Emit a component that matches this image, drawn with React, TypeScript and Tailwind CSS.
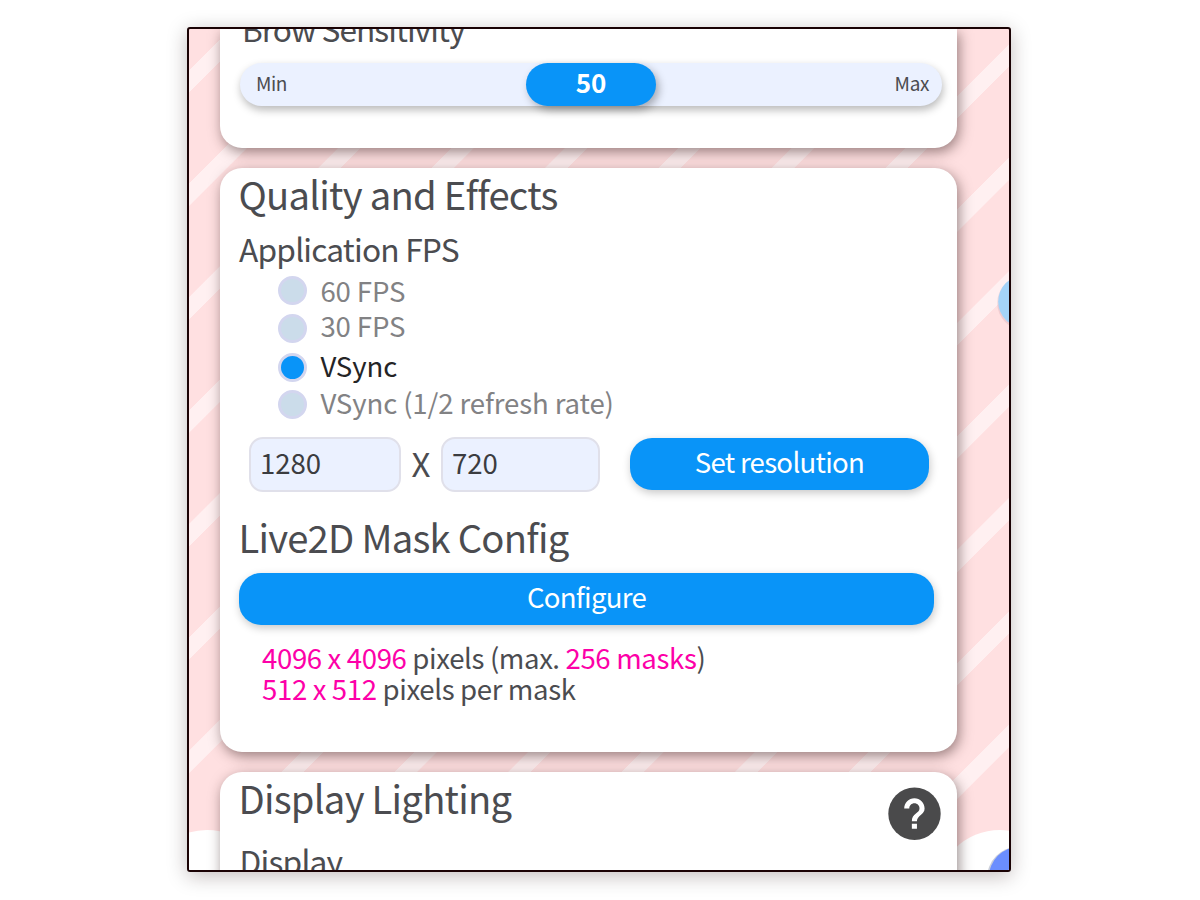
import React from "react";

const stripes =
  "bg-[repeating-linear-gradient(135deg,#ffe0e1_0px,#ffe0e1_29px,#fff0f1_29.4px,#fff0f1_44.8px,#ffe0e1_45.2px,#ffe0e1_80.2px)]";

const cardShadow = "shadow-[2px_4px_13px_rgba(50,25,25,0.5)]";

const titleStyle = "text-[38.2px] leading-[48px] tracking-[-0.74px] -ml-[0.6px]";

const buttonStyle =
  "rounded-[22px] bg-[#0994f8] text-[27.6px] leading-[44px] tracking-[-0.72px] text-white shadow-[1px_3px_8px_rgba(0,0,0,0.22)]";

const inputStyle =
  "flex h-[55px] items-center rounded-[14px] border-2 border-[#e0e0ea] bg-[#ebf1ff] pb-[6px] pl-[9px] text-[27.6px] leading-[40px] tracking-[-0.1px] text-[#3b3c40]";

function Radio({ label, checked, gap, lift }: { label: string; checked?: boolean; gap: string; lift: string }) {
  return (
    <label className={`flex h-[29px] items-center ${gap}`}>
      <span
        className={`h-[28.5px] w-[28.5px] shrink-0 rounded-full border-[3px] border-[#d3d6ef] ${checked ? "bg-[#0994f8]" : "bg-[#cbdcea]"}`}
      />
      <span
        className={`ml-[13.5px] text-[27.6px] leading-[28px] tracking-[-0.12px] whitespace-nowrap ${lift} ${checked ? "text-[#242426]" : "text-[#828284]"}`}
      >
        {label}
      </span>
    </label>
  );
}

export default function App() {
  return (
    <div className="flex h-[900px] w-[1200px] justify-center overflow-hidden bg-white pt-[27px] font-['Noto_Sans_CJK_JP','Noto_Sans',sans-serif] text-[#4b4c50]">
      <div className="relative mr-[2px] h-[845px] w-[824px] rounded-[3px] shadow-[0_4px_20px_rgba(30,10,10,0.27)]">
        <div className={`relative h-full w-full overflow-hidden rounded-[3px] border-2 border-[#1a0204] ${stripes}`}>
          <svg className="absolute inset-0 h-full w-full" viewBox="0 0 820 841">
            <circle cx="18" cy="865" r="64" fill="#fff" />
            <circle cx="811" cy="865" r="64" fill="#fff" />
            <circle cx="835.2" cy="274" r="27" fill="#a06070" opacity="0.15" />
            <circle cx="835.2" cy="272.5" r="26" fill="#a4d3f8" />
            <circle cx="829" cy="849" r="31" fill="#30406a" opacity="0.25" />
            <circle cx="830" cy="848" r="30" fill="#6b8efe" />
          </svg>

          <div className="relative ml-[31px] flex w-[737px] flex-col gap-[20px]">
            <section className={`h-[119px] rounded-b-[22px] bg-white pl-[19px] ${cardShadow}`}>
              <h3 className="-mt-[17px] ml-[3px] h-[40px] text-[31.6px] leading-[33px] tracking-[-0.92px]">Brow Sensitivity</h3>
              <div className="mt-[11px] ml-px flex h-[43px] w-[702px] items-center justify-between rounded-full bg-[#ebf1ff] pr-[13px] pl-[16px] text-[19px] tracking-[-0.4px] shadow-[1px_4px_8px_rgba(0,0,0,0.28)]">
                <span className="w-[60px] pb-[3px]">Min</span>
                <span className="mr-[4px] flex h-[43px] w-[130px] items-center justify-center rounded-full bg-[#0994f8] pb-[6px] pl-[1px] text-[26px] font-bold tracking-normal text-white shadow-[3px_4px_8px_rgba(0,0,0,0.3)]">
                  50
                </span>
                <span className="w-[60px] pb-[3px] text-right">Max</span>
              </div>
            </section>

            <section className={`h-[584px] rounded-[22px] bg-white pl-[19px] ${cardShadow}`}>
              <h2 className={`pt-[2px] ${titleStyle}`}>Quality and Effects</h2>
              <h3 className="mt-[10px] h-[40px] text-[31.7px] leading-[40px] tracking-[-0.8px]">Application FPS</h3>
              <div className="ml-[39.4px] flex flex-col">
                <Radio label="60 FPS" gap="mt-[8px]" lift="pb-[2px]" />
                <Radio label="30 FPS" gap="mt-[9px]" lift="pb-[7px]" />
                <Radio label="VSync" checked gap="mt-[10px]" lift="pb-[5px]" />
                <Radio label="VSync (1/2 refresh rate)" gap="mt-[8px]" lift="pb-[5px]" />
              </div>
              <div className="mt-[18px] flex items-center pl-[10px]">
                <div className={`w-[152px] ${inputStyle}`}>1280</div>
                <span className="w-[40px] pb-[3px] text-center text-[33px] leading-[50px]">X</span>
                <div className={`w-[159px] ${inputStyle}`}>720</div>
                <button className={`mb-[2px] ml-[30px] h-[52px] w-[299px] pb-[6px] ${buttonStyle}`}>Set resolution</button>
              </div>
              <h2 className={`mt-[21px] h-[60px] ${titleStyle}`}>Live2D Mask Config</h2>
              <button className={`block h-[52px] w-[695px] pb-[7px] ${buttonStyle}`}>Configure</button>
              <p className="mt-[17px] pl-[23px] text-[27.6px] leading-[31.4px] tracking-[-0.37px]">
                <span className="text-[#fd00a8]">4096 x 4096</span> pixels (max. <span className="text-[#fd00a8]">256 masks</span>)
                <br />
                <span className="text-[#fd00a8]">512 x 512</span> pixels per mask
              </p>
            </section>

            <section className={`h-[160px] rounded-[22px] bg-white pl-[19px] ${cardShadow}`}>
              <div className="flex h-[68px] justify-between pr-[16px]">
                <h2 className={`pt-[2px] ${titleStyle}`}>Display Lighting</h2>
                <svg className="mt-[15px] h-[53px] w-[53px]" viewBox="0 0 53 53">
                  <circle cx="26.5" cy="26.7" r="26.2" fill="#4a4a4b" />
                  <path
                    transform="translate(-4.2 -4.1) scale(2.55)"
                    d="M11 18h2v-2h-2v2zm1-12c-2.21 0-4 1.79-4 4h2c0-1.1.9-2 2-2s2 .9 2 2c0 2-3 1.75-3 5h2c0-2.25 3-2.5 3-5 0-2.21-1.79-4-4-4z"
                    fill="#fff"
                  />
                </svg>
              </div>
              <h3 className="ml-[0.6px] text-[31.7px] leading-[40px] tracking-[-0.8px]">Display</h3>
            </section>
          </div>
        </div>
      </div>
    </div>
  );
}
